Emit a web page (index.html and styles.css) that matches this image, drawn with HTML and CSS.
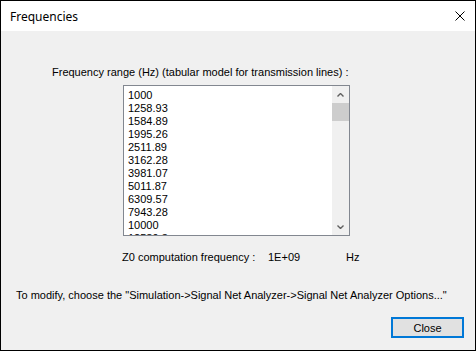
FILE: index.html
```html
<!DOCTYPE html>
<html lang="en">

<head>
  <meta charset="UTF-8" />
  <title>Frequencies</title>
  <link rel="stylesheet" href="styles.css">
</head>

<body>
  <div class="window">
    <div class="titlebar">
      <span class="title">Frequencies</span>
      <svg class="close-x" width="10" height="10" viewBox="0 0 10 10">
        <path d="M0.5 0.5 L9.5 9.5 M9.5 0.5 L0.5 9.5" stroke="#000" stroke-width="1" fill="none" />
      </svg>
    </div>

    <div class="content">
      <div class="label">Frequency range (Hz) (tabular model for transmission lines) :</div>

      <div class="listbox">
        <ul class="list">
          <li class="item">1000</li>
          <li class="item">1258.93</li>
          <li class="item">1584.89</li>
          <li class="item">1995.26</li>
          <li class="item">2511.89</li>
          <li class="item">3162.28</li>
          <li class="item">3981.07</li>
          <li class="item">5011.87</li>
          <li class="item">6309.57</li>
          <li class="item">7943.28</li>
          <li class="item">10000</li>
          <li class="item">12589.3</li>
        </ul>
        <div class="scrollbar">
          <div class="sb-btn">
            <svg width="7" height="4" viewBox="0 0 7 4">
              <path d="M0.5 3.5 L3.5 0.5 L6.5 3.5" stroke="#606060" stroke-width="1.4" fill="none" />
            </svg>
          </div>
          <div class="sb-thumb"></div>
          <div class="sb-track"></div>
          <div class="sb-btn">
            <svg width="7" height="4" viewBox="0 0 7 4">
              <path d="M0.5 0.5 L3.5 3.5 L6.5 0.5" stroke="#606060" stroke-width="1.4" fill="none" />
            </svg>
          </div>
        </div>
      </div>

      <div class="z0-row">
        <span class="z0-label">Z0 computation frequency :</span>
        <span class="z0-value">1E+09</span>
        <span>Hz</span>
      </div>

      <div class="hint">To modify, choose the "Simulation-&gt;Signal Net Analyzer-&gt;Signal Net Analyzer Options..."</div>

      <div class="actions">
        <button class="btn">Close</button>
      </div>
    </div>
  </div>
</body>

</html>
```

FILE: styles.css
```css
* {
  box-sizing: border-box;
}

body {
  margin: 0;
  font-family: "Liberation Sans", Arial, sans-serif;
  font-size: 11px;
  line-height: 13px;
  color: #000;
}

.window {
  width: 476px;
  height: 351px;
  border: 1px solid #000;
  display: flex;
  flex-direction: column;
  background-color: #f0f0f0;
}

.titlebar {
  height: 30px;
  background-color: #fff;
  display: flex;
  align-items: center;
  justify-content: space-between;
  padding: 0 10px 0 9px;
}

.title {
  font-family: "Noto Sans", sans-serif;
  font-size: 12px;
  line-height: 16px;
  margin-top: 1px;
}

.close-x {
  display: block;
}

.content {
  flex: 1;
  padding-top: 35px;
}

.label {
  padding-left: 51px;
}

.listbox {
  margin: 6px 0 0 122px;
  width: 227px;
  height: 151px;
  border: 1px solid #828790;
  background-color: #fff;
  display: flex;
}

.list {
  flex: 1;
  margin: 0;
  padding: 3px 0 0 4px;
  list-style: none;
  overflow: hidden;
}

.item {
  height: 13px;
}

.scrollbar {
  width: 17px;
  display: flex;
  flex-direction: column;
  background-color: #f0f0f0;
}

.sb-btn {
  height: 17px;
  display: flex;
  align-items: center;
  justify-content: center;
}

.sb-btn svg {
  display: block;
}

.sb-thumb {
  height: 18px;
  background-color: #cdcdcd;
}

.sb-track {
  flex: 1;
}

.z0-row {
  display: flex;
  padding-left: 121px;
  margin-top: 15px;
}

.z0-label {
  width: 146px;
}

.z0-value {
  width: 78px;
}

.hint {
  padding-left: 15px;
  margin-top: 25px;
}

.actions {
  display: flex;
  justify-content: flex-end;
  padding-right: 11px;
  margin-top: 15px;
}

.btn {
  width: 73px;
  height: 21px;
  border: 2px solid #0078d7;
  background-color: #e1e1e1;
  font-family: "Liberation Sans", Arial, sans-serif;
  font-size: 11px;
  color: #000;
  padding: 0;
  margin: 0;
}
```
